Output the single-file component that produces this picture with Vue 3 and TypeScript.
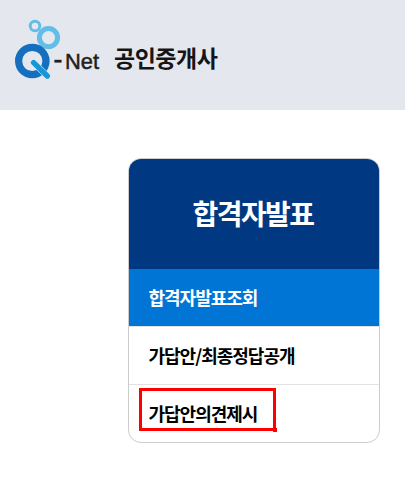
<script setup lang="ts">
import { ref } from 'vue'

interface MenuItem {
  label: string
  marked?: boolean
}

const items: MenuItem[] = [
  { label: '합격자발표조회' },
  { label: '가답안/최종정답공개' },
  { label: '가답안의견제시', marked: true },
]
const active = ref(0)
</script>

<template>
  <div class="page">
    <header class="top">
      <svg class="logo" width="110" height="110" viewBox="0 0 110 110" role="img" aria-label="Q-Net">
        <circle cx="35" cy="26" r="4.8" fill="none" stroke="#62bde8" stroke-width="2.9" />
        <circle cx="48.5" cy="37.6" r="9.1" fill="none" stroke="#62bde8" stroke-width="5" />
        <circle cx="32.3" cy="61" r="13.7" fill="none" stroke="#166fbe" stroke-width="7.2" />
        <path d="M33.6 62.6 47.3 76" stroke="#e4e7ee" stroke-width="6.4" stroke-linecap="round" />
        <path d="M33.6 62.6 47.3 76" stroke="#1697d8" stroke-width="5.4" stroke-linecap="round" />
        <path d="M54.4 61.2h7.2" stroke="#231f20" stroke-width="2.8" />
        <text class="word" x="65" y="68.8" textLength="34" lengthAdjust="spacingAndGlyphs">Net</text>
      </svg>
      <h1 class="site">공인중개사</h1>
    </header>
    <nav class="card">
      <h2 class="title">합격자발표</h2>
      <ul class="menu">
        <li
          v-for="(item, i) in items"
          :key="item.label"
          class="item"
          :class="{ active: i === active }"
          @click="active = i"
        >
          <span class="label">{{ item.label }}</span>
          <span v-if="item.marked" class="mark"></span>
        </li>
      </ul>
    </nav>
  </div>
</template>

<style>
body {
  background: #fff;
}
</style>

<style scoped>
.page {
  height: 478px;
  overflow: hidden;
  font-family: "Noto Sans CJK KR", sans-serif;
  color: #000;
}
.top {
  display: flex;
  align-items: center;
  height: 110px;
  background: #e4e7ee;
}
.logo {
  flex: none;
}
.word {
  font: 22px "Liberation Sans", sans-serif;
  fill: #231f20;
  stroke: #231f20;
  stroke-width: 0.5px;
}
.site {
  margin: 0 0 0 4px;
  padding-top: 3px;
  font-size: 23px;
  font-weight: 700;
  line-height: 32px;
  letter-spacing: -0.5px;
  color: #151515;
}
.card {
  box-sizing: border-box;
  width: 252px;
  height: 285px;
  margin: 48px 0 0 128px;
  border: 1px solid #ccc;
  border-radius: 13px;
  overflow: hidden;
}
.title {
  height: 110px;
  margin: 0;
  padding-right: 2px;
  background: #003881;
  color: #fff;
  font-size: 28px;
  font-weight: 700;
  line-height: 108px;
  letter-spacing: -1.55px;
  text-align: center;
}
.menu {
  margin: 0;
  padding: 0;
  list-style: none;
}
.item {
  position: relative;
  box-sizing: border-box;
  height: 58px;
  padding-left: 19.5px;
  border-bottom: 1px solid #e2e2e2;
  font-size: 18px;
  font-weight: 700;
  line-height: 56px;
  letter-spacing: -1px;
  white-space: nowrap;
}
.item:last-child {
  border-bottom: 0;
}
.item.active {
  background: #0075d5;
  background-clip: padding-box;
  color: #fff;
}
.mark {
  position: absolute;
  box-sizing: border-box;
  left: 10px;
  top: 3px;
  width: 137px;
  height: 43px;
  border: 3px solid #f00;
}
.mark::after {
  content: "";
  position: absolute;
  right: -4px;
  bottom: -4px;
  width: 4px;
  height: 4px;
  background: #f00;
}
</style>
